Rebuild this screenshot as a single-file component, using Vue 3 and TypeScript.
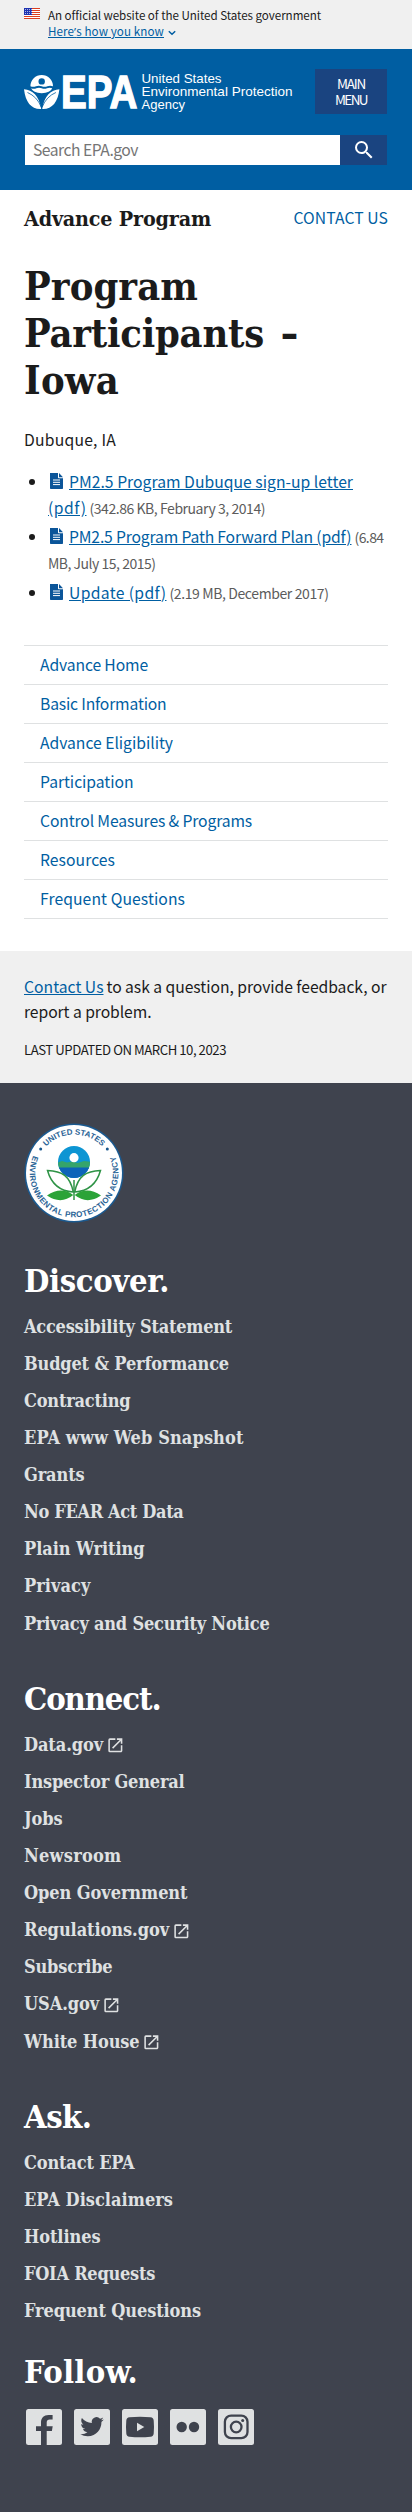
<script setup lang="ts">
interface Label {
  text: string
  width: number
  external?: boolean
}
interface FooterGroup {
  title: Label
  links: Label[]
}

// Tracks a single line of text so that it spans the given width in pixels.
const vFit = {
  mounted(el: HTMLElement, binding: { value: number }) {
    const count = (el.textContent ?? '').trim().length
    const natural = el.getBoundingClientRect().width
    if (count > 1) el.style.letterSpacing = `${(binding.value - natural) / count}px`
  },
}

const documents = [
  {
    link: [
      { text: 'PM2.5 Program Dubuque sign-up letter', width: 284 },
      { text: '(pdf)', width: 38.5 },
    ],
    meta: [{ text: '(342.86 KB, February 3, 2014)', width: 175.5 }],
  },
  {
    link: [{ text: 'PM2.5 Program Path Forward Plan (pdf)', width: 282.5 }],
    meta: [
      { text: '(6.84', width: 29 },
      { text: 'MB, July 15, 2015)', width: 107.5 },
    ],
  },
  {
    link: [{ text: 'Update (pdf)', width: 97.5 }],
    meta: [{ text: '(2.19 MB, December 2017)', width: 159 }],
  },
]

const sideNav: Label[] = [
  { text: 'Advance Home', width: 108 },
  { text: 'Basic Information', width: 126.5 },
  { text: 'Advance Eligibility', width: 133 },
  { text: 'Participation', width: 93.5 },
  { text: 'Control Measures & Programs', width: 212 },
  { text: 'Resources', width: 75 },
  { text: 'Frequent Questions', width: 145 },
]

const groups: FooterGroup[] = [
  {
    title: { text: 'Discover.', width: 145 },
    links: [
      { text: 'Accessibility Statement', width: 208 },
      { text: 'Budget & Performance', width: 205 },
      { text: 'Contracting', width: 106.5 },
      { text: 'EPA www Web Snapshot', width: 219.5 },
      { text: 'Grants', width: 60.5 },
      { text: 'No FEAR Act Data', width: 159.5 },
      { text: 'Plain Writing', width: 120.5 },
      { text: 'Privacy', width: 66.5 },
      { text: 'Privacy and Security Notice', width: 245.5 },
    ],
  },
  {
    title: { text: 'Connect.', width: 136.5 },
    links: [
      { text: 'Data.gov', width: 79, external: true },
      { text: 'Inspector General', width: 160.5 },
      { text: 'Jobs', width: 38.5 },
      { text: 'Newsroom', width: 97.5 },
      { text: 'Open Government', width: 163.5 },
      { text: 'Regulations.gov', width: 145, external: true },
      { text: 'Subscribe', width: 88.5 },
      { text: 'USA.gov', width: 75, external: true },
      { text: 'White House', width: 115.5, external: true },
    ],
  },
  {
    title: { text: 'Ask.', width: 67.5 },
    links: [
      { text: 'Contact EPA', width: 110.5 },
      { text: 'EPA Disclaimers', width: 149 },
      { text: 'Hotlines', width: 76.5 },
      { text: 'FOIA Requests', width: 131 },
      { text: 'Frequent Questions', width: 177 },
    ],
  },
]
</script>

<template>
  <div class="page">
    <div class="banner">
      <svg class="flag" viewBox="0 0 16 11">
        <rect width="16" height="11" fill="#fff" />
        <path d="M0 .5h16M0 2.5h16M0 4.5h16M0 6.5h16M0 8.5h16M0 10.5h16" stroke="#db3e1f" stroke-width="1" />
        <rect width="8" height="7" fill="#1e33b1" />
        <path d="M1 1.5h7M1 3.5h7M1 5.5h7" stroke="#fff" stroke-width=".8" stroke-dasharray=".8 1.2" />
      </svg>
      <div class="banner-text">
        <div><span v-fit="273">An official website of the United States government</span></div>
        <div class="banner-action">
          <a v-fit="116">Here<span class="apostrophe">’</span>s how you know</a>
          <svg class="chevron" viewBox="0 0 8 6"><path d="M.8 1.2 4 4.3 7.2 1.2" fill="none" stroke="#005ea2" stroke-width="1.5" /></svg>
        </div>
      </div>
    </div>

    <header class="header">
      <div class="brand-row">
        <svg class="logo" viewBox="0 0 272 40">
          <path d="M6.4 13.2a11.3 11.3 0 0 1 22.6 0q-2.8-1-5.6 0t-5.7 0-5.7 0-5.6 0z" fill="#fff" />
          <circle cx="17.7" cy="8.4" r="3.2" fill="#005ea2" />
          <path d="M7.2 15.3q2.600 1.100 5.200 0t5.300 0 5.300 0 5.200 0c-1.200 2.900-4.900 4.900-10.500 4.900s-9.300-2-10.500-4.900z" fill="#fff" />
          <path d="M0 16.300C8.500 17.500 15 22 17.200 36 7.500 36.500 1.500 29.500 0 16.300zM35.400 16.300C26.900 17.500 20.400 22 18.200 36 27.900 36.500 33.900 29.500 35.400 16.300z" fill="#fff" />
          <path d="M3.500 19.500Q13 23.500 17.200 34M31.900 19.500Q22.400 23.500 18.200 34" fill="none" stroke="#005ea2" stroke-width=".8" />
          <text class="logo-epa" x="37" y="35.200" textLength="76.500" lengthAdjust="spacingAndGlyphs">EPA</text>
          <g class="logo-name">
            <text x="117.500" y="10.400" textLength="80" lengthAdjust="spacingAndGlyphs">United States</text>
            <text x="117.500" y="23.100" textLength="151" lengthAdjust="spacingAndGlyphs">Environmental Protection</text>
            <text x="117.500" y="35.700" textLength="43.500" lengthAdjust="spacingAndGlyphs">Agency</text>
          </g>
        </svg>
        <button class="menu"><span v-fit="28">MAIN</span><span v-fit="32">MENU</span></button>
      </div>
      <div class="search">
        <div class="search-field"><span v-fit="105">Search EPA.gov</span></div>
        <button class="search-button">
          <svg viewBox="0 0 24 24"><path d="M15.5 14h-.79l-.28-.27A6.471 6.471 0 0 0 16 9.500 6.500 6.500 0 1 0 9.500 16c1.610 0 3.090-.59 4.230-1.570l.27.28v.79l5 4.990L20.490 19l-4.990-5zm-6 0C7.010 14 5 11.990 5 9.500S7.010 5 9.500 5 14 7.010 14 9.500 11.990 14 9.500 14z" fill="#fff" /></svg>
        </button>
      </div>
    </header>

    <main class="main">
      <div class="program-bar">
        <span class="program serif" v-fit="187">Advance Program</span>
        <a class="contact"><span v-fit="94.5">CONTACT US</span></a>
      </div>
      <h1 class="title serif">
        <span v-fit="174">Program</span><br />
        <span v-fit="240">Participants</span><span class="dash">-</span><br />
        <span v-fit="95">Iowa</span>
      </h1>
      <p class="place"><span v-fit="92">Dubuque, IA</span></p>
      <ul class="documents">
        <li v-for="(doc, i) in documents" :key="i">
          <svg class="file" viewBox="0 0 13 16">
            <path d="M0 0h8v4.500a.8.8 0 0 0 .8.8H13V15.300a.7.7 0 0 1-.7.7H.7a.7.7 0 0 1-.7-.7z" fill="#0b5599" />
            <path d="M9 0l4 4.200H9z" fill="#0b5599" />
            <path d="M3 7h7M3 9.300h7M3 11.600h7" stroke="#fff" stroke-width="1" />
          </svg>
          <template v-for="(part, k) in doc.link" :key="part.text"><br v-if="k > 0" /><a v-fit="part.width">{{ part.text }}</a></template>
          <span class="gap"></span>
          <template v-for="(part, k) in doc.meta" :key="part.text"><br v-if="k > 0" /><span class="meta" v-fit="part.width">{{ part.text }}</span></template>
        </li>
      </ul>
      <nav class="side-nav">
        <a v-for="item in sideNav" :key="item.text"><span v-fit="item.width">{{ item.text }}</span></a>
      </nav>
    </main>

    <section class="feedback">
      <p>
        <a v-fit="79.5">Contact Us</a><span class="gap"></span><span v-fit="280">to ask a question, provide feedback, or</span><br />
        <span v-fit="127.5">report a problem.</span>
      </p>
      <p class="updated"><span v-fit="202">LAST UPDATED ON MARCH 10, 2023</span></p>
    </section>

    <footer class="footer">
      <svg class="seal" viewBox="0 0 100 100">
        <defs>
          <path id="seal-top" d="M11.500 50A38.500 38.500 0 0 1 88.500 50" />
          <path id="seal-bottom" d="M9.800 31.400A44.300 44.300 0 1 0 90.200 31.400" />
          <clipPath id="globe"><circle cx="50" cy="39" r="16" /></clipPath>
        </defs>
        <circle cx="50" cy="50" r="49.500" fill="#1b5a90" />
        <circle cx="50" cy="50" r="48" fill="#fff" />
        <g class="seal-text">
          <text text-anchor="middle"><textPath href="#seal-top" startOffset="50%">UNITED STATES</textPath></text>
          <text class="seal-agency" text-anchor="middle"><textPath href="#seal-bottom" startOffset="50%">ENVIRONMENTAL PROTECTION AGENCY</textPath></text>
        </g>
        <circle cx="16.700" cy="26" r="1.500" fill="#17578d" />
        <circle cx="83.300" cy="26" r="1.500" fill="#17578d" />
        <g clip-path="url(#globe)">
          <rect x="33" y="22" width="34" height="34" fill="#0d95d3" />
          <path d="M33 40l5-2 5 1.500 5-1 6 1.500 6-2 7 1v7H33z" fill="#35a46b" />
          <rect x="33" y="44.500" width="34" height="12" fill="#0c63b9" />
        </g>
        <circle cx="50" cy="34.700" r="4.600" fill="#fff" />
        <path d="M23.500 47.500C38 48 46 53 49.300 69 34 68 27 60 23.500 47.500zM76.500 47.500C62 48 54 53 50.700 69 66 68 73 60 76.500 47.500z" fill="#fff" stroke="#2e9346" stroke-width="1.500" />
        <path d="M23 72.500Q37 63 49.300 72 37 82 23 72.500zM77 72.500Q63 63 50.700 72 63 82 77 72.500z" fill="#2ba338" />
        <path d="M50 57v20" stroke="#2e9346" stroke-width="1.500" />
      </svg>

      <section v-for="group in groups" :key="group.title.text" class="group">
        <h2 class="serif"><span v-fit="group.title.width">{{ group.title.text }}</span></h2>
        <ul>
          <li v-for="link in group.links" :key="link.text" class="serif">
            <a v-fit="link.width">{{ link.text }}</a>
            <svg v-if="link.external" class="external" viewBox="0 0 24 24"><path d="M19 19H5V5h7V3H5a2 2 0 0 0-2 2v14a2 2 0 0 0 2 2h14c1.100 0 2-.9 2-2v-7h-2v7zM14 3v2h3.590l-9.830 9.830 1.410 1.410L19 6.410V10h2V3h-7z" fill="#dfe1e2" /></svg>
          </li>
        </ul>
      </section>

      <h2 class="serif follow"><span v-fit="114">Follow.</span></h2>
      <div class="social">
        <svg viewBox="0 0 36 36">
          <rect class="tile" width="36" height="36" rx="2.500" />
          <path class="glyph" d="M15 36V22h-5v-4.700h5v-3.600c0-5 2.800-7.800 7.600-7.800h4v4.600h-2.700c-2.200 0-3.200.9-3.200 3v3.800h6l-.8 4.700h-5.200v14z" />
        </svg>
        <svg viewBox="0 0 36 36">
          <rect class="tile" width="36" height="36" rx="2.500" />
          <path class="glyph" transform="translate(6.300 6) scale(.98)" d="M23.953 4.570a10 10 0 0 1-2.825.775 4.958 4.958 0 0 0 2.163-2.723c-.951.555-2.005.959-3.127 1.184a4.920 4.920 0 0 0-8.384 4.482C7.690 8.095 4.067 6.130 1.640 3.162a4.822 4.822 0 0 0-.666 2.475c0 1.710.87 3.213 2.188 4.096a4.904 4.904 0 0 1-2.228-.616v.06a4.923 4.923 0 0 0 3.946 4.827 4.996 4.996 0 0 1-2.212.085 4.936 4.936 0 0 0 4.604 3.417 9.867 9.867 0 0 1-6.102 2.105c-.39 0-.779-.023-1.170-.067a13.995 13.995 0 0 0 7.557 2.209c9.053 0 13.998-7.496 13.998-13.985 0-.21 0-.42-.015-.63A9.935 9.935 0 0 0 24 4.590z" />
        </svg>
        <svg viewBox="0 0 36 36">
          <rect class="tile" width="36" height="36" rx="2.500" />
          <path class="glyph" d="M7.500 8.200Q18 7.200 28.500 8.200 31.500 8.400 31.700 11.500 32.300 18 31.700 24.500 31.500 27.600 28.500 27.800 18 28.800 7.500 27.800 4.500 27.600 4.300 24.500 3.700 18 4.300 11.500 4.500 8.400 7.500 8.200z" />
          <path class="tile" d="M15 13.700v8.600l7.300-4.300z" />
        </svg>
        <svg viewBox="0 0 36 36">
          <rect class="tile" width="36" height="36" rx="2.500" />
          <circle class="glyph" cx="11.700" cy="18" r="5.200" />
          <circle class="glyph" cx="24" cy="18" r="5.200" />
        </svg>
        <svg viewBox="0 0 36 36">
          <rect class="tile" width="36" height="36" rx="2.500" />
          <rect class="line" x="6.900" y="6.600" width="22.600" height="22.600" rx="6.200" />
          <circle class="line" cx="18.200" cy="18" r="5.300" />
          <circle class="glyph" cx="24.700" cy="11.400" r="1.500" />
        </svg>
      </div>
    </footer>
  </div>
</template>

<style>
body {
  background: #3f434e;
}
</style>

<style scoped>
.page {
  width: 412px;
  height: 2512px;
  overflow: hidden;
  background: #fff;
  color: #1b1b1b;
  font-family: 'Noto Sans CJK SC', 'Noto Sans', sans-serif;
  font-size: 15.700px;
  line-height: 25.44px;
  white-space: nowrap;
}
p, h1, h2, ul {
  margin: 0;
  padding: 0;
}
a {
  color: #005ea2;
}
button {
  border: 0;
  padding: 0;
  color: #fff;
  font-family: inherit;
  background: #1a4480;
}
.serif {
  font-family: 'DejaVu Serif Condensed', 'DejaVu Serif', serif;
  font-stretch: condensed;
  font-weight: 700;
}
.gap {
  display: inline-block;
  width: 3px;
}
.banner {
  display: flex;
  box-sizing: border-box;
  height: 49px;
  padding: 7px 24px 0;
  background: #f0f0f0;
  font-size: 11.600px;
  line-height: 16px;
}
.flag {
  width: 16px;
  height: 11px;
  margin: 1px 8px 0 0;
}
.banner-action a {
  text-decoration: underline;
}
.apostrophe {
  font-family: 'Noto Sans', sans-serif;
  line-height: 0;
}
.chevron {
  width: 8px;
  height: 6px;
  margin-left: 4px;
}
.header {
  box-sizing: border-box;
  height: 141px;
  padding: 20px 24px 0;
  background: #005ea2;
}
.brand-row {
  display: flex;
  justify-content: space-between;
  height: 66px;
}
.logo {
  width: 272px;
  height: 40px;
  margin-top: 3.500px;
  overflow: visible;
}
.logo-epa {
  font: 700 47px 'Liberation Sans', Arial, sans-serif;
  fill: #fff;
  stroke: #fff;
  stroke-width: 1.400px;
}
.logo-name {
  font: 12.600px 'Liberation Sans', Arial, sans-serif;
  fill: #fff;
}
.menu {
  display: flex;
  flex-direction: column;
  align-items: center;
  justify-content: center;
  width: 72px;
  height: 45px;
  margin: -.5px 1px 0 0;
  font-size: 13.500px;
  line-height: 16px;
}
.search {
  display: flex;
  height: 30px;
  padding: 0 1px;
}
.search-field {
  box-sizing: border-box;
  width: 315px;
  padding-left: 8px;
  background: #fff;
  color: #757575;
  line-height: 30px;
}
.search-button {
  display: flex;
  align-items: center;
  justify-content: center;
  flex: 1;
}
.search-button svg {
  width: 24px;
  height: 24px;
}
.main {
  box-sizing: border-box;
  height: 761px;
  padding: 0 24px;
}
.program-bar {
  display: flex;
  justify-content: space-between;
  height: 70px;
  padding-top: 16px;
}
.program {
  font-size: 21.300px;
  line-height: 25px;
}
.contact {
  line-height: 23px;
}
.title {
  margin-top: -13px;
  font-size: 39.500px;
  line-height: 46.800px;
}
.dash {
  display: inline-block;
  margin-left: 18px;
  transform: scaleX(1.250);
}
.place {
  margin-top: 24px;
}
.documents {
  margin-top: 16.500px;
  padding-left: 24px;
}
.documents li {
  height: 50.880px;
  margin-bottom: 4.240px;
}
.documents li:last-child {
  height: 25.440px;
}
.documents a,
.feedback a {
  text-decoration: underline;
}
.file {
  width: 13px;
  height: 16px;
  margin: 0 6px 0 2px;
  vertical-align: -1px;
}
.meta {
  color: #5c5c5c;
  font-size: 14px;
  line-height: 0;
}
.side-nav {
  margin-top: 40.500px;
  border-top: 1px solid #dfe1e2;
}
.side-nav a {
  display: block;
  height: 38px;
  padding-left: 16px;
  border-bottom: 1px solid #dfe1e2;
  line-height: 37px;
}
.feedback {
  box-sizing: border-box;
  height: 132px;
  padding: 23px 24px 0;
  background: #f0f0f0;
}
.updated {
  margin-top: 12px;
  font-size: 13.200px;
}
.footer {
  box-sizing: border-box;
  height: 1429px;
  padding: 40px 24px 0;
  background: #3f434e;
}
.seal {
  display: block;
  width: 100px;
  height: 100px;
}
.seal-text {
  font: 700 8px 'Liberation Sans', Arial, sans-serif;
  fill: #2b6496;
}
.seal-agency {
  letter-spacing: .45px;
}
.group {
  height: 418px;
}
.group:last-of-type {
  height: 255.500px;
}
.footer h2 {
  height: 40px;
  color: #fff;
  font-size: 32.500px;
  line-height: 38px;
}
.seal + .group {
  margin-top: 38.500px;
}
.group ul {
  padding-top: 13px;
  list-style: none;
}
.group li {
  height: 37.150px;
  font-size: 18px;
  line-height: 24px;
}
.group a {
  color: #dfe1e2;
}
.external {
  width: 18.700px;
  height: 18.700px;
  margin-left: 2.500px;
  vertical-align: -4px;
}
.social {
  display: flex;
  gap: 12px;
  margin: 16px 0 0 2px;
}
.social svg {
  width: 36px;
  height: 36px;
}
.tile {
  fill: #dfe1e2;
}
.glyph {
  fill: #3f434e;
}
.line {
  fill: none;
  stroke: #3f434e;
  stroke-width: 2.300px;
}
</style>
